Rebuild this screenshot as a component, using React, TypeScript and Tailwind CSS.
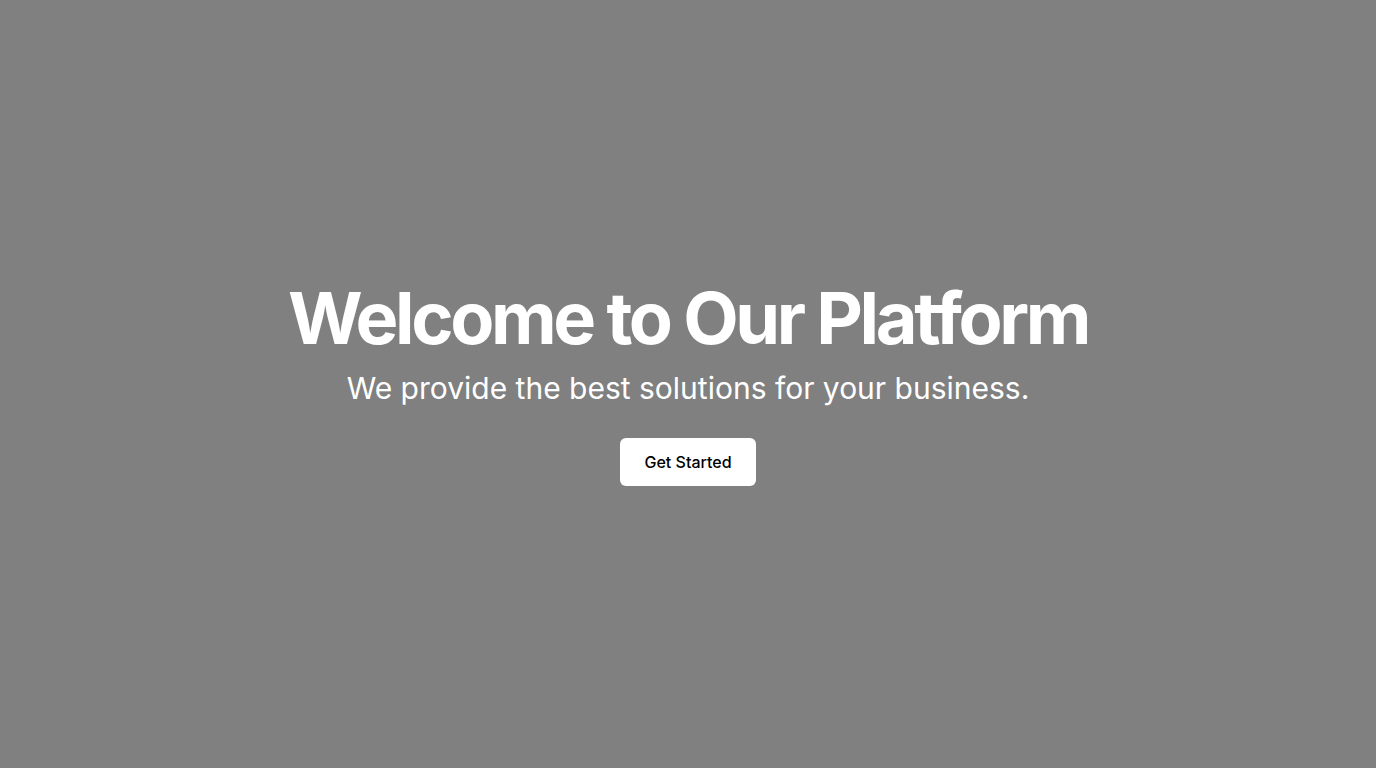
import React from "react";

export default function App() {
  return (
    <div
      className="min-h-screen w-full bg-[#808080] flex flex-col items-center justify-center text-center"
      style={{ fontFamily: "Inter, 'Noto Sans', sans-serif" }}
    >
      <h1 className="text-7xl font-bold tracking-[-0.047em] text-white leading-none mb-4">
        Welcome to Our Platform
      </h1>
      <p className="text-3xl text-white mb-8">
        We provide the best solutions for your business.
      </p>
      <button className="bg-white text-black text-base font-medium px-6 py-3 rounded-md">
        Get Started
      </button>
    </div>
  );
}
